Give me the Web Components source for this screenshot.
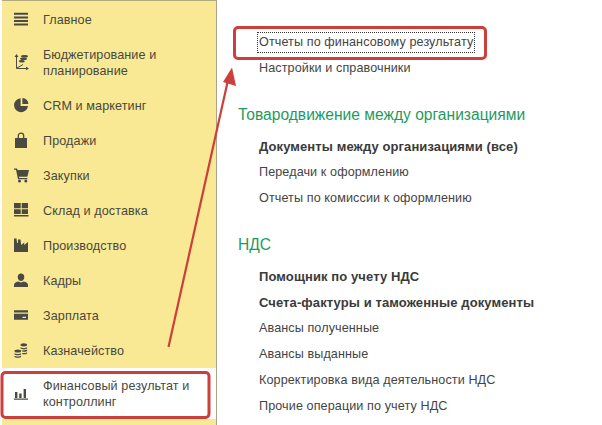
<!DOCTYPE html>
<html lang="ru">
<head>
<meta charset="utf-8">
<title>Разделы</title>
<style>
  html, body { margin: 0; background: #fff; }
  body { width: 602px; height: 425px; overflow: hidden; font-family: "Liberation Sans", Arial, sans-serif; color: #444; }
</style>
</head>
<body>
<app-page>
  <side-panel slot="side">
    <side-item icon="menu">Главное</side-item>
    <side-item icon="budget" tall>Бюджетирование и<br>планирование</side-item>
    <side-item icon="pie">CRM и маркетинг</side-item>
    <side-item icon="bag">Продажи</side-item>
    <side-item icon="cart">Закупки</side-item>
    <side-item icon="stock">Склад и доставка</side-item>
    <side-item icon="factory">Производство</side-item>
    <side-item icon="person">Кадры</side-item>
    <side-item icon="card">Зарплата</side-item>
    <side-item icon="coins">Казначейство</side-item>
    <side-item icon="bars" tall active>Финансовый результат и<br>контроллинг</side-item>
  </side-panel>
  <main-links slot="main">
    <link-row focused>Отчеты по финансовому результату</link-row>
    <link-row>Настройки и справочники</link-row>
    <link-group>Товародвижение между организациями</link-group>
    <link-row bold>Документы между организациями (все)</link-row>
    <link-row>Передачи к оформлению</link-row>
    <link-row>Отчеты по комиссии к оформлению</link-row>
    <link-group>НДС</link-group>
    <link-row bold>Помощник по учету НДС</link-row>
    <link-row bold>Счета-фактуры и таможенные документы</link-row>
    <link-row>Авансы полученные</link-row>
    <link-row>Авансы выданные</link-row>
    <link-row>Корректировка вида деятельности НДС</link-row>
    <link-row>Прочие операции по учету НДС</link-row>
  </main-links>
  <note-marks slot="over"></note-marks>
</app-page>

<script>
const ICONS = {
  menu: '<path d="M0 1.800h14v2H0zM0 5.400h14v2H0zM0 9h14v2H0zM0 12.600h14v2H0z"/>',
  budget: '<path d="M2.500 2v12.500H14" fill="none" stroke="currentColor" stroke-width="1"/><path d="M2.500 0L0.500 3h4zM15 14.500l-3-1.800v3.600z"/><path d="M3 14L9 10.500" fill="none" stroke="currentColor" stroke-width="1"/><ellipse cx="10.500" cy="2.200" rx="3.500" ry="1.300"/><ellipse cx="9.500" cy="4.800" rx="3.500" ry="1.300"/><ellipse cx="7.800" cy="7.200" rx="3" ry="1.200"/>',
  pie: '<path d="M6.600 1.200A7 7 0 1 0 14 9H6.600z"/><path d="M8.400 1A6 6 0 0 1 14.400 7H8.400z"/>',
  bag: '<path d="M1 6h12v10H1z"/><path d="M4.300 6.500V3.800a2.700 2.700 0 0 1 5.400 0v2.700" fill="none" stroke="currentColor" stroke-width="1.300"/>',
  cart: '<path d="M0 1.500h3l.6 1.600H15l-1.600 6.600H5l.3 1.200h8v1.300H4L2 2.800H0z"/><circle cx="5.500" cy="14" r="1.500"/><circle cx="11.800" cy="14" r="1.500"/>',
  stock: '<path d="M0 1h6.700v5.200H0zM7.700 1H14v5.200H7.700zM0 7.200h6.700v4.800H0zM7.700 7.200H14v4.800H7.700zM0 13h14.500v1.500H0z"/>',
  factory: '<path d="M0 15V1.500h2.500l.6 4.500h.8L4 2.500h2.500l.7 5.500 3-2.500v2.500L14 5v10z"/>',
  person: '<path d="M7 1.500c2 0 3.300 1.400 3.300 3.400S9 9 7 9 3.700 6.900 3.700 4.900 5 1.500 7 1.500z"/><path d="M4.300 9.600C5 10.100 6 10.400 7 10.400s2-.3 2.700-.8c2.600.6 4.300 1.700 4.300 3.500v2H0v-2c0-1.800 1.700-2.900 4.300-3.500z"/>',
  card: '<path d="M0 3.200h14v2.300H0zM0 6.800h14v6H0zM8.500 9.800v1.200h3.500V9.800z" fill-rule="evenodd"/>',
  coins: '<path d="M6.500 2.800a3.300 1.600 0 1 1 6.600 0a3.300 1.600 0 1 1 -6.600 0zM6.500 5.300c1 1.100 5.600 1.100 6.600 0v1.300c-1 1.100-5.600 1.100-6.600 0zM7.600 8.200c1.500.4 4.300.3 5.500-.6v1.300c-.9.900-3.400 1-4.900.6zM8.300 10.900c1.700.3 3.800.1 4.800-.7v1.300c-.8.800-2.900 1-4.800.7z"/><path d="M0.500 9a3.300 1.500 0 1 1 6.600 0a3.300 1.500 0 1 1 -6.600 0zM0.500 11.300c1 1 5.600 1 6.600 0v1.300c-1 1-5.600 1-6.600 0zM0.500 13.800c1 1 5.600 1 6.600 0v1.200c-1 1.100-5.600 1.100-6.600 0z"/>',
  bars: '<path d="M1 7h2.400v6H1zM5.200 8.500h2.400v4.500H5.200zM9.600 4h2.400v9H9.600zM0 13.500h14V14.700H0z"/>'
};

class AppPage extends HTMLElement {
  constructor() {
    super();
    this.attachShadow({ mode: "open" }).innerHTML = `
      <style>
        :host { display: block; position: relative; width: 602px; height: 425px; overflow: hidden; }
        .wrap { display: flex; height: 100%; }
      </style>
      <div class="wrap"><slot name="side"></slot><slot name="main"></slot></div>
      <slot name="over"></slot>`;
  }
}

class SidePanel extends HTMLElement {
  constructor() {
    super();
    this.attachShadow({ mode: "open" }).innerHTML = `
      <style>
        :host {
          display: flex; flex-direction: column; box-sizing: border-box; flex: none;
          width: 215px; height: 425px; margin-left: 2px; padding-top: 1px;
          background: #f9e994; border-top: 1px solid #b4ab7c; border-right: 1px solid #a9a38a;
        }
      </style>
      <slot></slot>`;
  }
}

class SideItem extends HTMLElement {
  constructor() {
    super();
    const icon = ICONS[this.getAttribute("icon")] || "";
    this.attachShadow({ mode: "open" }).innerHTML = `
      <style>
        :host {
          display: flex; align-items: center; gap: 14px; height: 35px; padding-left: 12px;
          font-size: 12.6px; line-height: 16px; color: #484840; letter-spacing: 0.1px;
        }
        :host([tall]) { height: 51px; }
        :host([active]) { background: #fff; margin-left: -2px; padding-left: 14px; }
        svg { width: 15px; height: 16.500px; flex: none; color: #4a4a42; fill: currentColor; }
      </style>
      <svg viewBox="0 0 15 16.500">${icon}</svg>
      <span><slot></slot></span>`;
  }
}

class MainLinks extends HTMLElement {
  constructor() {
    super();
    this.attachShadow({ mode: "open" }).innerHTML = `
      <style>
        :host { display: flex; flex-direction: column; padding: 29px 0 0 21px; }
      </style>
      <slot></slot>`;
  }
}

class LinkRow extends HTMLElement {
  constructor() {
    super();
    this.attachShadow({ mode: "open" }).innerHTML = `
      <style>
        :host {
          display: flex; align-items: center; height: 26px; padding-left: 20px;
          font-size: 12.6px; color: #444; letter-spacing: 0.1px;
        }
        :host([bold]) { font-weight: bold; font-size: 13px; color: #3a3a3a; }
        span { padding: 2px 1px; line-height: 15px; white-space: nowrap; }
        :host([focused]) span { outline: 1px dotted #333; }
      </style>
      <span><slot></slot></span>`;
  }
}

class LinkGroup extends HTMLElement {
  constructor() {
    super();
    this.attachShadow({ mode: "open" }).innerHTML = `
      <style>
        :host {
          display: flex; align-items: center; height: 36px; margin-top: 16px;
          font-size: 15.6px; color: #1f9a5f; white-space: nowrap;
        }
      </style>
      <slot></slot>`;
  }
}

class NoteMarks extends HTMLElement {
  constructor() {
    super();
    this.attachShadow({ mode: "open" }).innerHTML = `
      <style>
        :host { position: absolute; inset: 0; pointer-events: none; }
        svg { display: block; }
      </style>
      <svg width="602" height="425" viewBox="0 0 602 425" fill="none" stroke="#cc3f3a">
        <rect x="2" y="372.500" width="207" height="45" rx="3.500" stroke-width="3"/>
        <rect x="234.500" y="27.500" width="251" height="31" rx="3.500" stroke-width="3"/>
        <path d="M168.500 347L228 80" stroke-width="2.200"/>
        <path d="M232 67.500L236 86L223 82z" fill="#cc3f3a" stroke="none"/>
      </svg>`;
  }
}

customElements.define("app-page", AppPage);
customElements.define("side-panel", SidePanel);
customElements.define("side-item", SideItem);
customElements.define("main-links", MainLinks);
customElements.define("link-row", LinkRow);
customElements.define("link-group", LinkGroup);
customElements.define("note-marks", NoteMarks);
</script>
</body>
</html>
